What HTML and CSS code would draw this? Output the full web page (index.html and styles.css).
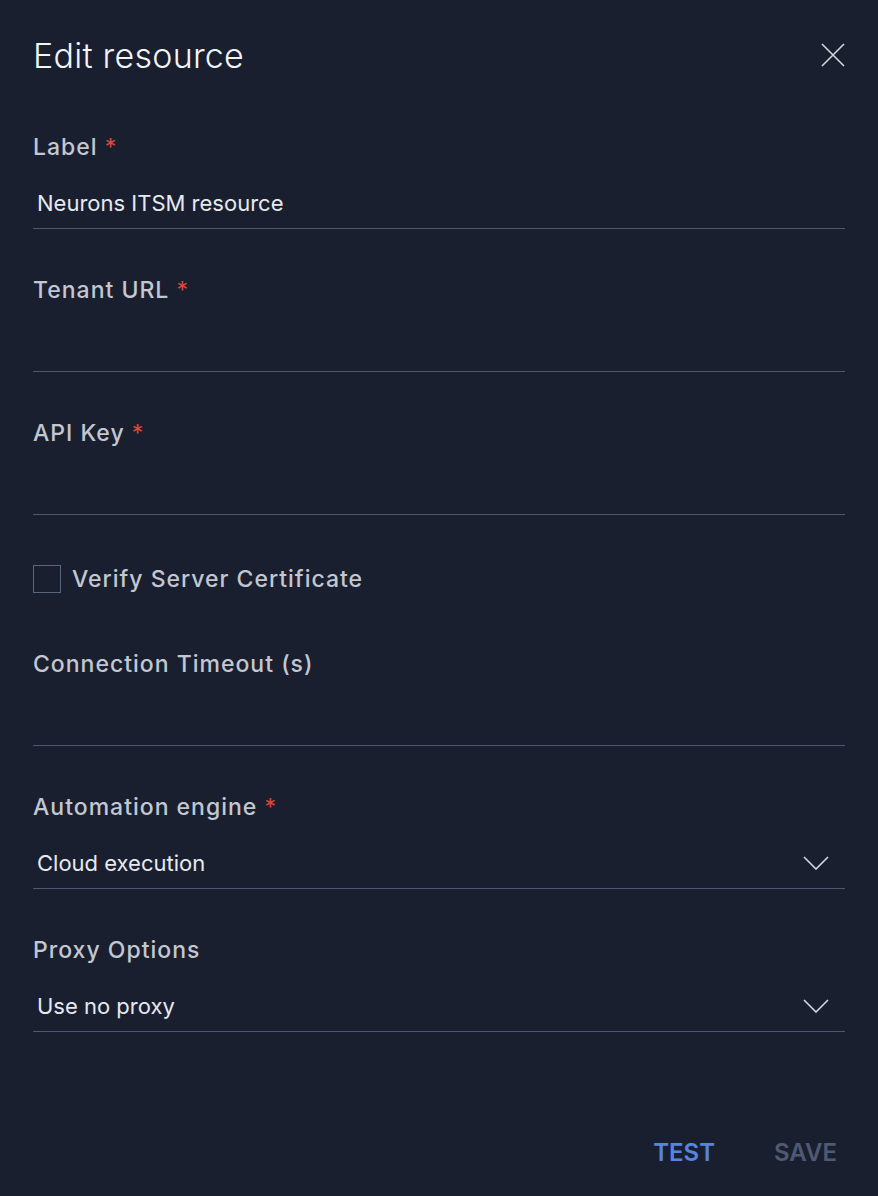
FILE: index.html
```
<!DOCTYPE html>
<html>
<head>
<meta charset="utf-8">
<link rel="stylesheet" href="styles.css">
</head>
<body>
<div class="dialog">
  <div class="header">
    <h1 class="title">Edit resource</h1>
    <button class="close" aria-label="Close">
      <svg width="24" height="24" viewBox="0 0 24 24"><path d="M1 1 L23 23 M23 1 L1 23" stroke="#d3d7de" stroke-width="1.6" fill="none"/></svg>
    </button>
  </div>

  <div class="field">
    <div class="label">Label <span class="req">*</span></div>
    <div class="input"><span class="value">Neurons ITSM resource</span></div>
  </div>

  <div class="field">
    <div class="label">Tenant URL <span class="req">*</span></div>
    <div class="input"></div>
  </div>

  <div class="field">
    <div class="label">API Key <span class="req">*</span></div>
    <div class="input"></div>
  </div>

  <div class="check-row">
    <span class="checkbox"></span>
    <span class="check-label">Verify Server Certificate</span>
  </div>

  <div class="field field-after-check">
    <div class="label">Connection Timeout (s)</div>
    <div class="input"></div>
  </div>

  <div class="field">
    <div class="label">Automation engine <span class="req">*</span></div>
    <div class="input select"><span class="value">Cloud execution</span>
      <svg class="chev" width="26" height="14" viewBox="0 0 26 14"><path d="M1 1 L13 13 L25 1" stroke="#d3d7de" stroke-width="1.6" fill="none"/></svg>
    </div>
  </div>

  <div class="field">
    <div class="label">Proxy Options</div>
    <div class="input select"><span class="value">Use no proxy</span>
      <svg class="chev" width="26" height="14" viewBox="0 0 26 14"><path d="M1 1 L13 13 L25 1" stroke="#d3d7de" stroke-width="1.6" fill="none"/></svg>
    </div>
  </div>

  <div class="footer">
    <button class="btn btn-test">TEST</button>
    <button class="btn btn-save">SAVE</button>
  </div>
</div>
</body>
</html>
```
FILE: styles.css
```
html, body {
  margin: 0;
  padding: 0;
  background: #1a1f30;
  height: 100%;
}
body {
  font-family: "Inter", "Liberation Sans", sans-serif;
  color: #c5cad3;
}
.dialog {
  padding: 0 33px;
}
.header {
  display: flex;
  align-items: center;
  justify-content: space-between;
  height: 132px;
  padding-bottom: 22px;
  box-sizing: border-box;
}
.title {
  margin: 0;
  font-size: 34px;
  font-weight: 300;
  letter-spacing: 0.25px;
  color: #f2f4f7;
}
.close {
  background: none;
  border: 0;
  padding: 0;
  width: 24px;
  height: 24px;
  display: flex;
}
.field + .field {
  margin-top: 46px;
}
.label {
  font-size: 23px;
  line-height: 30px;
  font-weight: 500;
  letter-spacing: 1px;
  color: #c2c7d0;
}
.req {
  color: #d9483b;
  font-weight: 400;
}
.input {
  border-bottom: 1px solid #4b5875;
  display: flex;
  align-items: flex-start;
  padding: 26px 16px 0 4px;
  height: 40px;
}
.value {
  font-size: 22px;
  line-height: 30px;
  color: #e6e9ee;
  flex: 1;
}
.chev {
  margin-top: 8px;
}
.check-row {
  display: flex;
  align-items: center;
  margin-top: 50px;
  height: 28px;
}
.checkbox {
  width: 26px;
  height: 26px;
  border: 1px solid #5a6580;
  margin-right: 11px;
}
.check-label {
  font-size: 23px;
  font-weight: 500;
  letter-spacing: 1px;
  color: #c2c7d0;
}
.field-after-check {
  margin-top: 56px;
}
.footer {
  display: flex;
  justify-content: flex-end;
  margin-top: 104px;
  gap: 43px;
}
.btn {
  background: none;
  border: 0;
  font-family: "Inter", "Liberation Sans", sans-serif;
  font-size: 24px;
  font-weight: 600;
  padding: 0 8px;
  line-height: 34px;
}
.btn-test {
  color: #5585e0;
}
.btn-save {
  color: #4e5a72;
}
```
